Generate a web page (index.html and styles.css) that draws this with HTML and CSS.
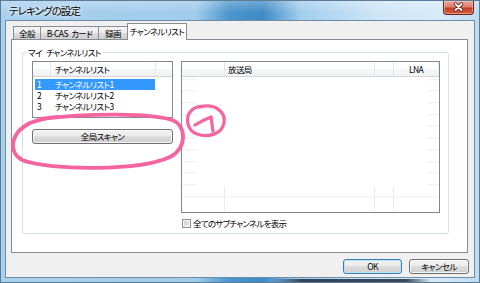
FILE: index.html
```html
<!DOCTYPE html>
<html lang="ja">
<head>
<meta charset="utf-8">
<title>テレキングの設定</title>
<link rel="stylesheet" href="styles.css">
</head>
<body>
<div class="window">
  <div class="titlebar">
    <span class="title">テレキングの設定</span>
    <div class="close">
      <svg width="31" height="14" viewBox="0 0 31 14">
        <path d="M12.5 4 L18.5 10 M18.5 4 L12.5 10" stroke="#5b1b12" stroke-width="3.4" stroke-linecap="round" fill="none"/>
        <path d="M12.5 4 L18.5 10 M18.5 4 L12.5 10" stroke="#ffffff" stroke-width="1.8" stroke-linecap="round" fill="none"/>
      </svg>
    </div>
  </div>
  <div class="client">
    <div class="tabs">
      <div class="tab t1">全般</div>
      <div class="tab t2">B-CAS カード</div>
      <div class="tab t3">録画</div>
      <div class="tab t4 active">チャンネルリスト</div>
    </div>
    <div class="panel">
      <fieldset class="group">
        <legend>マイ チャンネルリスト</legend>
        <div class="group-body">
          <div class="left-col">
            <div class="lv lv-small">
              <div class="lv-head">
                <div class="hc hc-idx"></div>
                <div class="hc hc-name">チャンネルリスト</div>
                <div class="hc hc-fill"></div>
              </div>
              <div class="lv-body">
                <div class="row selected"><span class="c-idx">1</span><span class="c-name">チャンネルリスト1</span></div>
                <div class="row"><span class="c-idx">2</span><span class="c-name">チャンネルリスト2</span></div>
                <div class="row"><span class="c-idx">3</span><span class="c-name">チャンネルリスト3</span></div>
              </div>
            </div>
            <button class="btn scan">全局スキャン</button>
          </div>
          <div class="right-col">
            <div class="lv lv-big">
              <div class="lv-head">
                <div class="hc hc-a"></div>
                <div class="hc hc-b">放送局</div>
                <div class="hc hc-c"></div>
                <div class="hc hc-d">LNA</div>
                <div class="hc hc-fill"></div>
              </div>
              <div class="lv-body grid"></div>
            </div>
            <label class="check"><span class="box"></span><span>全てのサブチャンネルを表示</span></label>
          </div>
        </div>
      </fieldset>
    </div>
    <div class="footer">
      <button class="btn default ok">OK</button>
      <button class="btn cancel">キャンセル</button>
    </div>
  </div>
  <svg class="annot" width="480" height="283" viewBox="0 0 480 283">
    <path d="M40 119 C90 113 150 113 172 120 C187 125 187 149 170 157 C140 171 50 171 22 160 C8 152 10 133 30 123 C35 121 45 118 58 117" fill="none" stroke="#f4649f" stroke-width="3.8" stroke-linecap="round"/>
    <path d="M200 107 C215 103 226 112 224 123 C222 134 208 138 197 134 C186 130 185 116 192 110 C195 107 200 106 205 106" fill="none" stroke="#f4649f" stroke-width="3.2" stroke-linecap="round"/>
    <path d="M195 125 C200 122 206 119 211 117 C212 122 212 127 213 131" fill="none" stroke="#f4649f" stroke-width="3.2" stroke-linecap="round" stroke-linejoin="round"/>
  </svg>
</div>
</body>
</html>
```
FILE: styles.css
```css
* { box-sizing: border-box; }
html, body { margin: 0; padding: 0; }
body {
  width: 480px;
  height: 283px;
  overflow: hidden;
  font-family: "Noto Sans CJK JP", "Noto Sans", sans-serif;
  font-feature-settings: "palt";
  font-size: 8.5px;
  letter-spacing: -0.6px;
  color: #000;
}
.window {
  position: relative;
  width: 480px;
  height: 283px;
  display: flex;
  flex-direction: column;
  padding: 0 4px 4px 4px;
  border: 1px solid #5d7a96;
  background:
    linear-gradient(90deg, rgba(30,45,60,0) 270px, rgba(30,45,62,.85) 300px, rgba(30,45,62,.85) 405px, rgba(30,45,60,0) 430px) 0 100% / 100% 3px no-repeat,
    linear-gradient(180deg, rgba(255,255,255,.25) 0, rgba(255,255,255,0) 12px),
    linear-gradient(90deg, #a9d1ee 0, #a0cbea 195px, #4c95cc 228px, #3f8ac6 262px, #a3ceed 300px, #cfe6f7 380px, #d7eaf8 440px, #bcdaf1 480px);
}
.titlebar {
  height: 19px;
  display: flex;
  align-items: flex-start;
}
.title {
  line-height: 20px;
  font-size: 10.5px;
  letter-spacing: -0.9px;
  padding-left: 4px;
  text-shadow: 0 0 5px rgba(255,255,255,.9), 0 0 2px rgba(255,255,255,.9);
}
.close {
  margin-left: auto;
  margin-right: 1px;
  width: 31px;
  height: 14px;
  border: 1px solid #6b2418;
  border-top: none;
  border-radius: 0 0 4px 4px;
  background: linear-gradient(180deg, #e8a999 0, #dc7f6c 45%, #c4402a 55%, #d4603f 100%);
  box-shadow: inset 0 0 0 1px rgba(255,220,210,.45);
}
.close svg { display: block; margin-top: -1px; margin-left: -1px; }
.client {
  flex: 1;
  background: #f0f0f0;
  border: 1px solid #6f8ca8;
  padding: 2px 6px 0 5px;
  display: flex;
  flex-direction: column;
}
.tabs {
  height: 16px;
  display: flex;
  align-items: flex-end;
  padding-left: 2px;
}
.tab {
  height: 13px;
  border: 1px solid #898c95;
  border-bottom: none;
  margin-right: -1px;
  background: linear-gradient(180deg, #f3f3f3 0, #ebebeb 50%, #dddddd 50%, #cfcfcf 100%);
  text-align: center;
  line-height: 12px;
  white-space: nowrap;
  word-spacing: 2px;
}
.t1 { width: 28px; }
.t2 { width: 59px; }
.t3 { width: 30px; }
.t4 { width: 60px; }
.tab.active {
  position: relative;
  z-index: 1;
  height: 17px;
  margin-bottom: -1px;
  background: #fff;
  line-height: 15px;
}
.panel {
  height: 214px;
  border: 1px solid #898c95;
  background: #fff;
  padding: 7px 18px 18px 10px;
}
.group {
  margin: 0;
  height: 187px;
  padding: 0 8px 0 9px;
  border: 1px solid #d5dfe5;
  border-radius: 3px;
  min-width: 0;
}
.group legend {
  padding: 0 2px;
  margin-left: -6px;
  line-height: 11px;
  word-spacing: 3px;
}
.group-body {
  display: flex;
  gap: 8px;
  padding-top: 3px;
}
.left-col {
  width: 141px;
  display: flex;
  flex-direction: column;
  gap: 11px;
}
.right-col {
  flex: 1;
  display: flex;
  flex-direction: column;
}
.lv {
  border: 1px solid #828790;
  background: #fff;
  overflow: hidden;
}
.lv-small { height: 57px; }
.lv-big { height: 152px; display: flex; flex-direction: column; }
.lv-head {
  display: flex;
  height: 15px;
  flex-shrink: 0;
  border-bottom: 1px solid #d5d5d5;
  background: linear-gradient(180deg, #ffffff 0, #ffffff 45%, #f7f8fa 50%, #f1f2f4 100%);
}
.hc {
  border-right: 1px solid #e3e8ed;
  line-height: 14px;
  white-space: nowrap;
}
.hc-fill { flex: 1; border-right: none; }
.hc-idx { width: 18px; }
.hc-name { width: 105px; padding-left: 4px; }
.hc-a { width: 43px; }
.hc-b { width: 150px; padding-left: 3px; }
.hc-c { width: 19px; }
.hc-d { width: 45px; text-align: center; }
.lv-body { padding-top: 2px; }
.row {
  display: flex;
  height: 11px;
  width: 120px;
  margin-left: 2px;
  line-height: 11px;
  white-space: nowrap;
}
.row.selected { background: #3399ff; color: #fff; }
.c-idx { width: 15px; padding-left: 2px; flex-shrink: 0; }
.c-name { padding-left: 5px; }
.lv-body.grid {
  flex: 1;
  padding: 0;
  background:
    linear-gradient(90deg, transparent 15px, #fff 15px, #fff 246px, transparent 246px) 0 0 / 100% 110px no-repeat,
    linear-gradient(90deg, transparent 42px, #ececec 42px, #ececec 43px, transparent 43px, transparent 192px, #ececec 192px, #ececec 193px, transparent 193px, transparent 211px, #ececec 211px, #ececec 212px, transparent 212px),
    repeating-linear-gradient(180deg, transparent 0, transparent 10.7px, #eeeeee 10.7px, #eeeeee 11.7px) 0 -8.7px,
    #fff;
}
.check {
  display: flex;
  align-items: center;
  gap: 2px;
  margin-top: 6px;
  margin-left: 1px;
  height: 9px;
  line-height: 9px;
  white-space: nowrap;
  letter-spacing: -0.75px;
}
.box {
  width: 9px;
  height: 9px;
  flex-shrink: 0;
  border: 1px solid #8e8f8f;
  background: linear-gradient(135deg, #cdd0d4 0, #eeeeee 100%);
  box-shadow: inset 0 0 0 1px #f6f6f6;
}
.btn {
  font-family: inherit;
  font-feature-settings: "palt";
  font-size: 8.5px;
  letter-spacing: -0.6px;
  color: #000;
  height: 15px;
  padding: 0;
  line-height: 13px;
  border: 1px solid #707070;
  border-radius: 3px;
  background: linear-gradient(180deg, #f2f2f2 0, #ebebeb 50%, #dddddd 50%, #cfcfcf 100%);
  box-shadow: inset 0 0 0 1px rgba(255,255,255,.75);
}
.scan { width: 141px; }
.footer {
  display: flex;
  justify-content: flex-end;
  gap: 7px;
  margin-top: 6px;
  margin-right: -1px;
}
.ok { width: 59px; }
.cancel { width: 60px; }
.btn.default {
  border-color: #3c7fb1;
  box-shadow: inset 0 0 0 1px #b9e3f8;
}
.annot {
  position: absolute;
  left: -1px;
  top: -1px;
  pointer-events: none;
}
```
